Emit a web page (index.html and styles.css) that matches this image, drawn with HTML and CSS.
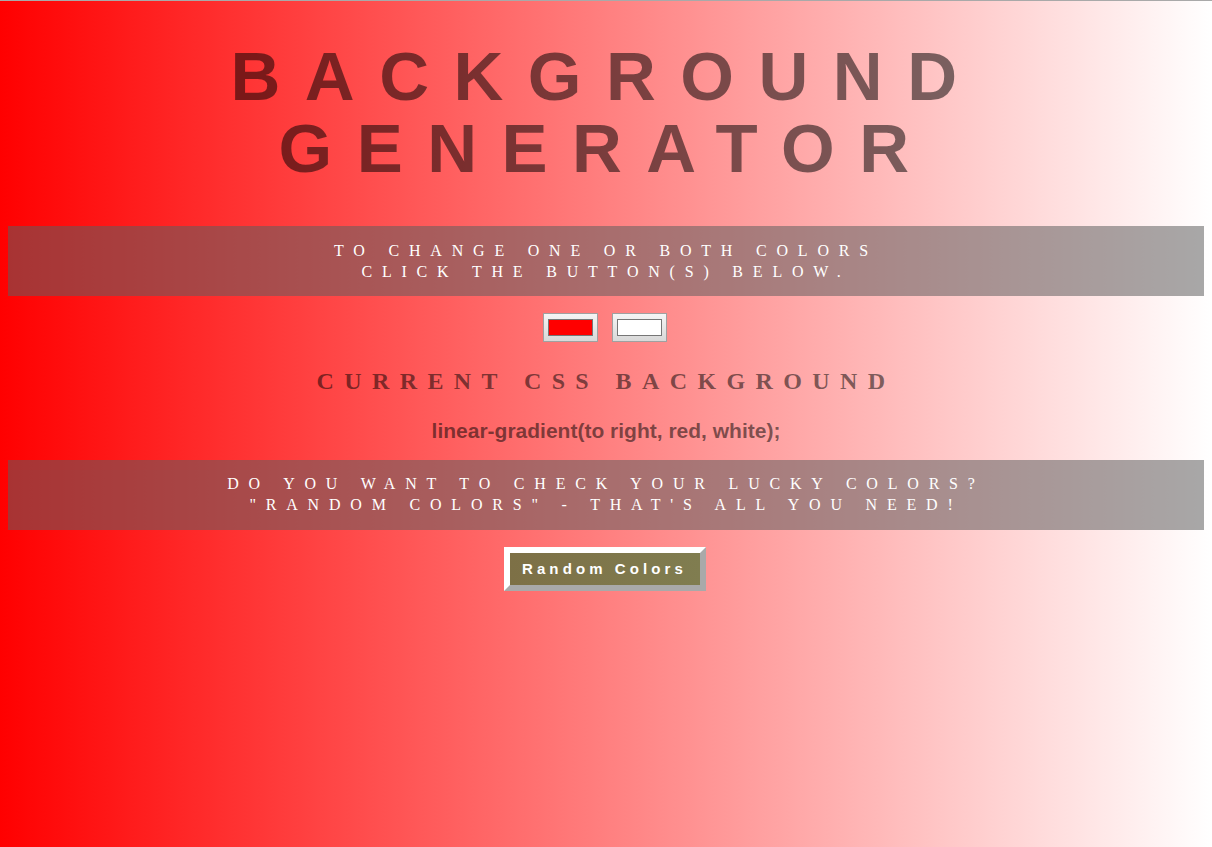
FILE: index.html
```html
<!DOCTYPE html>
<html lang="en">
<head>
<meta charset="utf-8">
<title>Background Generator</title>
<link rel="stylesheet" href="styles.css">
</head>
<body>
  <h1 class="title">Background Generator</h1>
  <div class="band">
    <p class="band-text">To change one or both colors<br>click the button(s) below.</p>
  </div>
  <div class="pickers">
    <button class="picker" type="button"><span class="swatch swatch-red"></span></button>
    <button class="picker" type="button"><span class="swatch swatch-white"></span></button>
  </div>
  <h2 class="subtitle">Current CSS Background</h2>
  <p class="css-value">linear-gradient(to right, red, white);</p>
  <div class="band band-lower">
    <p class="band-text">Do you want to check your lucky colors?<br>"Random colors" - that's all you need!</p>
  </div>
  <div class="random-wrap">
    <button class="random" type="button">Random Colors</button>
  </div>
</body>
</html>
```

FILE: styles.css
```css
html {
  min-height: 100%;
  background: linear-gradient(to right, red, white);
  box-shadow: inset 0 1px 0 #a9a9a9;
}

body {
  margin: 0;
  padding: 0 8px;
  min-height: 847px;
  box-sizing: border-box;
  text-align: center;
}

.title {
  margin: 41px 0 0;
  font-family: "Liberation Sans", Arial, sans-serif;
  font-weight: bold;
  font-size: 69px;
  line-height: 72px;
  letter-spacing: 24.5px;
  text-transform: uppercase;
  color: rgba(0, 0, 0, 0.52);
}

.band {
  margin-top: 41px;
  padding: 14px 0;
  background: rgba(94, 94, 94, 0.54);
}

.band-lower {
  margin-top: 17px;
  padding: 13px 0 15px;
}

.band-text {
  margin: 0;
  font-family: "Liberation Serif", "Times New Roman", serif;
  font-size: 16px;
  line-height: 21px;
  letter-spacing: 9.8px;
  text-transform: uppercase;
  color: #ffffff;
}

.pickers {
  margin-top: 17px;
  display: flex;
  justify-content: center;
  gap: 14px;
  padding-right: 2px;
}

.picker {
  display: block;
  margin: 0;
  width: 55px;
  height: 29px;
  padding: 5px 4px;
  box-sizing: border-box;
  border: 1px solid #a0a0a0;
  background: linear-gradient(#f5f5f5, #d8d8d8);
}

.swatch {
  display: block;
  width: 100%;
  height: 100%;
  box-sizing: border-box;
  border: 1px solid #767676;
}

.swatch-red {
  background: #ff0000;
}

.swatch-white {
  background: #ffffff;
}

.subtitle {
  margin: 25px 0 0;
  font-family: "Liberation Serif", "Times New Roman", serif;
  font-weight: bold;
  font-size: 24px;
  line-height: 28px;
  letter-spacing: 10.4px;
  text-transform: uppercase;
  color: rgba(0, 0, 0, 0.52);
}

.css-value {
  margin: 24px 0 0;
  font-family: "Liberation Sans", Arial, sans-serif;
  font-weight: bold;
  font-size: 21px;
  line-height: 24px;
  color: rgba(0, 0, 0, 0.52);
}

.random-wrap {
  margin-top: 17px;
  display: flex;
  justify-content: center;
  padding-right: 2px;
}

.random {
  margin: 0;
  height: 44px;
  padding: 0 13px 0 12px;
  border: 6px solid;
  border-color: #ffffff #a9a9a9 #a9a9a9 #ffffff;
  background: linear-gradient(to right, #7d7046, #807d50);
  font-family: "Liberation Sans", Arial, sans-serif;
  font-weight: bold;
  font-size: 15px;
  line-height: 32px;
  letter-spacing: 4.1px;
  color: #ffffff;
}
```
